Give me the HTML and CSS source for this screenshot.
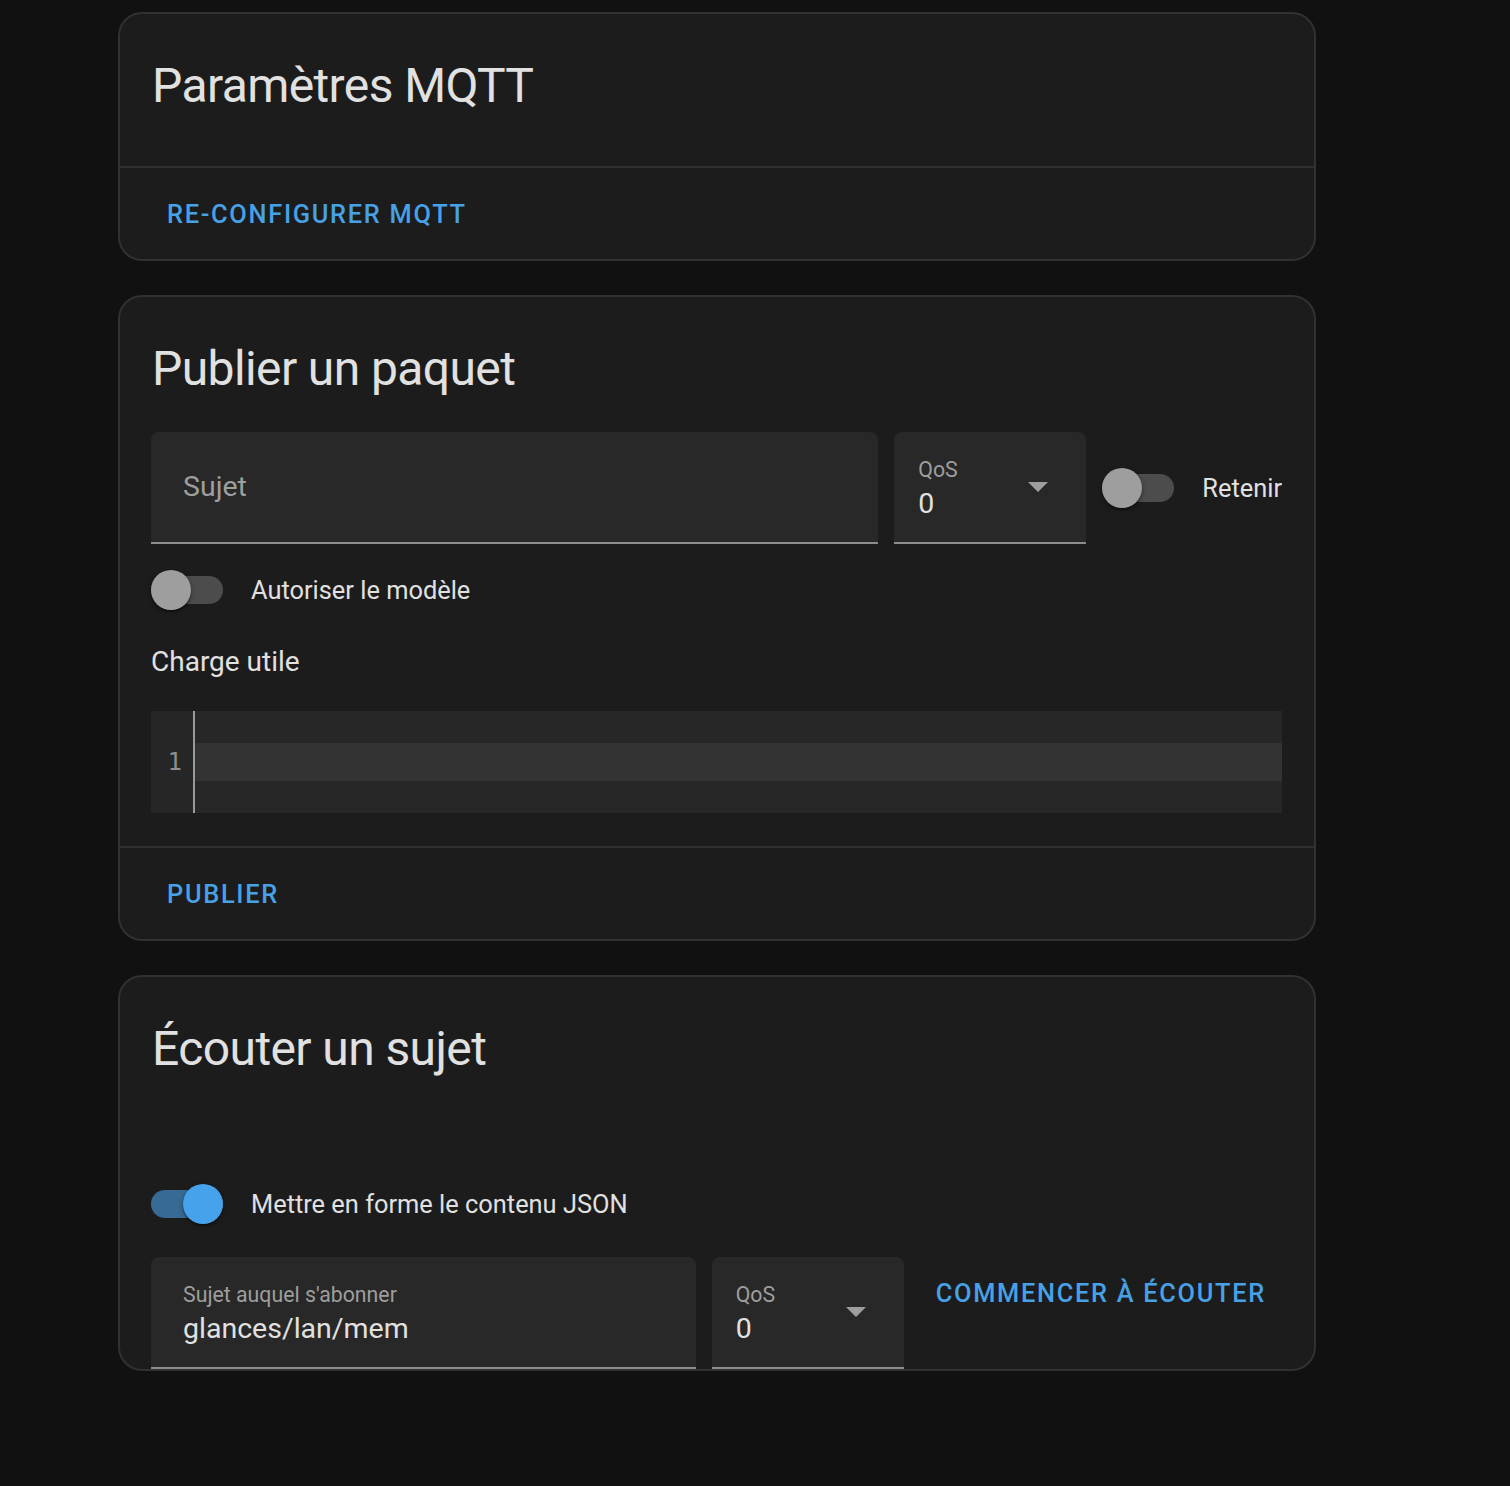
FILE: index.html
```html
<!DOCTYPE html>
<html lang="fr">
<head>
<meta charset="utf-8">
<title>MQTT</title>
<link rel="stylesheet" href="styles.css">
</head>
<body>
<main class="page">
  <section class="card">
    <h1 class="card-header card-header--tall">Paramètres MQTT</h1>
    <div class="card-actions">
      <button class="text-btn">Re-configurer MQTT</button>
    </div>
  </section>

  <section class="card">
    <h1 class="card-header">Publier un paquet</h1>
    <div class="card-content card-content--publish">
      <div class="field-row">
        <div class="textfield textfield--grow">
          <span class="placeholder">Sujet</span>
        </div>
        <div class="select">
          <span class="float-label">QoS</span>
          <span class="value">0</span>
          <span class="arrow"></span>
        </div>
        <div class="formfield formfield--retain">
          <span class="switch"><span class="track"></span><span class="knob"></span></span>
          <span class="ff-label">Retenir</span>
        </div>
      </div>
      <div class="formfield formfield--template">
        <span class="switch"><span class="track"></span><span class="knob"></span></span>
        <span class="ff-label">Autoriser le modèle</span>
      </div>
      <p class="section-label">Charge utile</p>
      <div class="editor">
        <div class="gutter"><span class="line-no">1</span></div>
        <div class="code">
          <div class="active-line"></div>
        </div>
      </div>
    </div>
    <div class="card-actions">
      <button class="text-btn">Publier</button>
    </div>
  </section>

  <section class="card">
    <h1 class="card-header">Écouter un sujet</h1>
    <div class="card-content card-content--listen">
      <div class="formfield formfield--json">
        <span class="switch switch--on"><span class="track"></span><span class="knob"></span></span>
        <span class="ff-label">Mettre en forme le contenu JSON</span>
      </div>
      <div class="field-row field-row--listen">
        <div class="textfield textfield--grow textfield--filled">
          <span class="float-label">Sujet auquel s'abonner</span>
          <span class="value">glances/lan/mem</span>
        </div>
        <div class="select">
          <span class="float-label">QoS</span>
          <span class="value">0</span>
          <span class="arrow"></span>
        </div>
        <button class="text-btn text-btn--listen">Commencer à écouter</button>
      </div>
    </div>
  </section>
</main>
</body>
</html>
```

FILE: styles.css
```css
* { box-sizing: border-box; }

html, body {
  margin: 0;
  padding: 0;
  background: #111111;
  color: #e1e1e1;
  font-family: Roboto, "Noto Sans", "Liberation Sans", sans-serif;
}

body { min-height: 1486px; }

.page {
  width: 1198px;
  margin-left: 118px;
  padding-top: 12px;
  display: flex;
  flex-direction: column;
  gap: 34px;
}

.card {
  background: #1c1c1c;
  border: 2px solid #313131;
  border-radius: 24px;
}

.card-header {
  margin: 0;
  padding: 40px 32px 31px;
  font-size: 48px;
  font-weight: 400;
  line-height: 64px;
  letter-spacing: -0.6px;
  color: #e1e1e1;
}

.card-header--tall { padding-bottom: 48px; }

.card-actions {
  border-top: 2px solid #2f2f2f;
  padding: 10px 31px 9px;
  display: flex;
}

.text-btn {
  background: none;
  border: 0;
  height: 72px;
  padding: 0 16px;
  font-family: Roboto, "Noto Sans", "Liberation Sans", sans-serif;
  font-size: 25.4px;
  font-weight: 500;
  letter-spacing: 1.7px;
  text-transform: uppercase;
  color: #47a1e6;
  cursor: pointer;
}

.card-content { padding: 0 32px 0 31px; }
.card-content--publish { padding-bottom: 33px; }

.field-row {
  display: flex;
  align-items: center;
  gap: 16px;
}

.field-row--listen {
  align-items: flex-start;
  margin-top: 33px;
}

.textfield, .select {
  position: relative;
  height: 112px;
  background: #282828;
  border-radius: 8px 8px 0 0;
  border-bottom: 2px solid #8c8c8c;
}

.textfield--grow { flex: 1; }

.textfield { padding: 0 32px; }

.placeholder {
  display: block;
  line-height: 110px;
  font-size: 28.5px;
  color: #9e9e9e;
}

.select {
  width: 192px;
  padding: 0 24px;
}

.float-label {
  display: block;
  padding-top: 25px;
  font-size: 21.3px;
  line-height: 26px;
  color: #9e9e9e;
}

.value {
  display: block;
  margin-top: 3px;
  font-size: 28.5px;
  line-height: 36px;
  color: #e1e1e1;
}

.arrow {
  position: absolute;
  right: 38px;
  top: 50px;
  width: 0;
  height: 0;
  border-left: 10px solid transparent;
  border-right: 10px solid transparent;
  border-top: 10px solid #9e9e9e;
}

.formfield {
  display: flex;
  align-items: center;
  gap: 28px;
}

.formfield--template { margin-top: 26px; }
.formfield--json { margin-top: 72px; }

.switch {
  position: relative;
  width: 72px;
  height: 40px;
  flex: none;
}

.track {
  position: absolute;
  left: 0;
  top: 6px;
  width: 72px;
  height: 28px;
  border-radius: 14px;
  background: #4c4c4c;
}

.knob {
  position: absolute;
  left: 0;
  top: 0;
  width: 40px;
  height: 40px;
  border-radius: 50%;
  background: #9e9e9e;
  box-shadow: 0 2px 2px rgba(0,0,0,0.35), 0 1px 5px rgba(0,0,0,0.25);
}

.switch--on .track { background: #376a94; }
.switch--on .knob { left: 32px; background: #46a2ea; }

.ff-label {
  font-size: 25.4px;
  line-height: 40px;
  color: #e1e1e1;
}

.section-label {
  margin: 32px 0 0;
  font-size: 28px;
  line-height: 40px;
  color: #e1e1e1;
}

.editor {
  margin-top: 29px;
  height: 102px;
  display: flex;
  background: #272727;
}

.gutter {
  width: 44px;
  background: #262626;
  border-right: 2px solid #9a9a9a;
  padding-top: 32px;
  text-align: right;
  padding-right: 11px;
}

.line-no {
  display: block;
  line-height: 38px;
  font-family: "DejaVu Sans Mono", "Liberation Mono", monospace;
  font-size: 24px;
  color: #8f8f8f;
}

.code {
  flex: 1;
  padding-top: 32px;
}

.active-line {
  height: 38px;
  background: #333333;
}
```
